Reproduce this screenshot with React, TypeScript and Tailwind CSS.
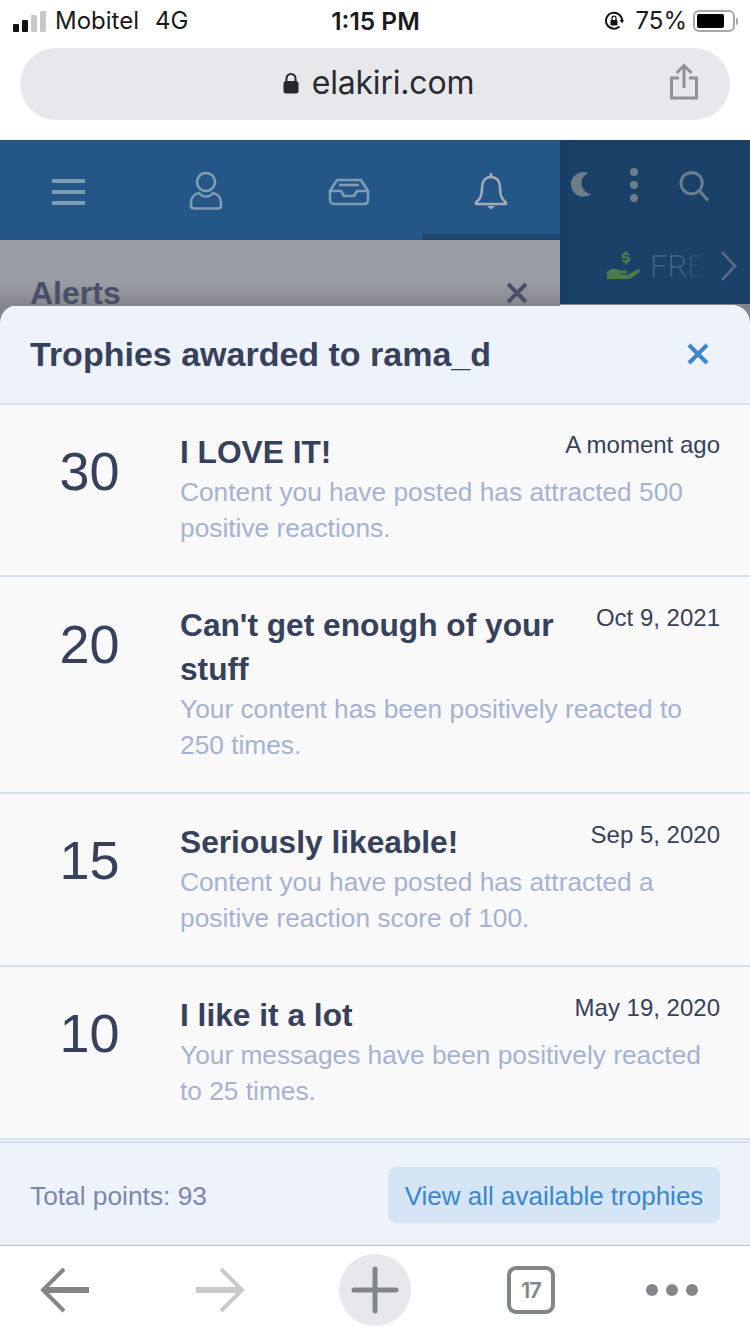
const trophies = [
  { points: 30, title: "I LOVE IT!", date: "A moment ago", text: "Content you have posted has attracted 500 positive reactions.", h: "h-[172px]", pt: "pt-[25px]", numPt: "pt-[36px]" },
  { points: 20, title: "Can't get enough of your stuff", date: "Oct 9, 2021", text: "Your content has been positively reacted to 250 times.", h: "h-[217px]", pt: "pt-[26px]", numPt: "pt-[37px]" },
  { points: 15, title: "Seriously likeable!", date: "Sep 5, 2020", text: "Content you have posted has attracted a positive reaction score of 100.", h: "h-[173px]", pt: "pt-[26px]", numPt: "pt-[36px]" },
  { points: 10, title: "I like it a lot", date: "May 19, 2020", text: "Your messages have been positively reacted to 25 times.", h: "h-[173px]", pt: "pt-[26px]", numPt: "pt-[36px]" },
];

function StatusBar() {
  return (
    <div className="flex h-[40px] items-center justify-between pl-[13px] pr-[12px] pt-[2px] font-['Inter',sans-serif] text-[24px] text-[#1a1a1c]">
      <div className="flex w-[260px] items-center">
        <div className="flex items-end gap-[3px]">
          <span className="h-[8px] w-[6px] rounded-[1px] bg-[#111]" />
          <span className="h-[12px] w-[6px] rounded-[1px] bg-[#111]" />
          <span className="h-[17px] w-[6px] rounded-[1px] bg-[#c8c8c8]" />
          <span className="h-[21px] w-[6px] rounded-[1px] bg-[#c8c8c8]" />
        </div>
        <span className="ml-[9px]">Mobitel</span>
        <span className="ml-[16px]">4G</span>
      </div>
      <div className="text-[24.500px] font-semibold">1:15 PM</div>
      <div className="flex w-[260px] items-center justify-end">
        <svg width="20" height="20" viewBox="0 0 20 20" fill="none" className="mr-[11px]">
          <path d="M15.500 15.500A8 8 0 1 1 18 10" stroke="#111" strokeWidth="2" />
          <path d="M15.500 9l2.700 3.400L20 9z" fill="#111" />
          <rect x="6.500" y="9" width="7" height="5.500" rx="1" fill="#111" />
          <path d="M8 9V7.200a2 2 0 0 1 4 0V9" stroke="#111" strokeWidth="1.300" />
        </svg>
        <span>75%</span>
        <div className="ml-[6px] flex h-[22px] w-[42px] items-center rounded-[6px] border-2 border-[#a8a8a8] p-[2px]">
          <div className="h-full w-[27px] rounded-[2px] bg-black" />
        </div>
        <div className="ml-[1px] h-[7px] w-[2px] rounded-r-sm bg-[#a8a8a8]" />
      </div>
    </div>
  );
}

function UrlBar() {
  return (
    <div className="bg-white px-[20px] pb-[20px] pt-[8px]">
      <div className="relative flex h-[72px] items-center justify-center rounded-[36px] bg-[#e7e8ec] pl-[7px]">
        <svg width="16" height="22" viewBox="0 0 16 22" className="mr-[13px] mt-[-2px]" fill="none">
          <path d="M3.500 10V6.500a4.500 4.500 0 0 1 9 0V10" stroke="#26272b" strokeWidth="2" />
          <rect x="0.500" y="9" width="15" height="12.500" rx="2.500" fill="#26272b" />
        </svg>
        <span className="mt-[-2px] font-['Inter',sans-serif] text-[32px] leading-none tracking-[-0.2px] text-[#2a2b2f]">elakiri.com</span>
        <svg width="30" height="38" viewBox="0 0 30 38" fill="none" className="absolute right-[31px] top-[15px]" stroke="#8f9296" strokeWidth="3">
          <path d="M15 25V3" />
          <path d="M7.500 10L15 2.500 22.500 10" />
          <path d="M10 15H2.500v20h25V15H20" />
        </svg>
      </div>
    </div>
  );
}

function Backdrop() {
  return (
    <div className="flex h-[166px] overflow-hidden bg-[#85878c]">
      <div className="w-[560px]">
        <div className="flex h-[100px] border-t border-[#1f4a73] bg-[#245787]">
          <div className="flex w-[137px] items-center justify-center pt-[2px]">
            <svg width="33" height="26" viewBox="0 0 33 26" stroke="#7f9cb4" strokeWidth="4">
              <path d="M0 2h33M0 13h33M0 24h33" />
            </svg>
          </div>
          <div className="flex w-[138px] items-center justify-center pt-[1px]">
            <svg width="34" height="38" viewBox="0 0 34 38" fill="none" stroke="#7f9cb4" strokeWidth="2.600">
              <ellipse cx="17" cy="10" rx="9" ry="9" />
              <path d="M10 21c-5 1-8 5-8 10v2.500c0 2 1 3 3 3h24c2 0 3-1 3-3V31c0-5-3-9-8-10-2 2.500-4.500 3.500-7 3.500s-5-1-7-3.500z" />
            </svg>
          </div>
          <div className="flex w-[147px] items-center justify-center pt-[2px]">
            <svg width="42" height="28" viewBox="0 0 42 28" fill="none" stroke="#7f9cb4" strokeWidth="2.600">
              <path d="M9 2h24l7 11v9c0 2.500-1.500 4-4 4H6c-2.500 0-4-1.500-4-4v-9z" />
              <path d="M2 13h11l3 5h10l3-5h11" />
              <path d="M11 7h20" />
            </svg>
          </div>
          <div className="flex w-[138px] flex-col items-center border-b-[6px] border-[#1f4770] pt-[31px]">
            <svg width="34" height="38" viewBox="0 0 34 38" fill="none" stroke="#a3adb5" strokeWidth="2.600">
              <path d="M17 5c-6 0-9 4.500-9 11 0 8-2 11-6 14.500V32h30v-1.500C28 27 26 24 26 16c0-6.500-3-11-9-11z" strokeLinejoin="round" />
              <path d="M17 1v4" />
              <path d="M13 34h8l-4 3.500z" fill="#a3adb5" stroke="none" />
            </svg>
          </div>
        </div>
        <div className="h-[66px] bg-[linear-gradient(#9a9ca3_65%,#85878c_100%)] px-[30px] pt-[36px]">
          <div className="flex items-center justify-between pr-[1px] font-['Liberation_Sans',sans-serif]">
            <span className="text-[32px] font-bold leading-[34px] text-[#484f66]">Alerts</span>
            <svg width="22" height="22" viewBox="0 0 22 22" stroke="#484f66" strokeWidth="4" className="mr-[1px]">
              <path d="M2 2l18 18M20 2L2 20" />
            </svg>
          </div>
        </div>
      </div>
      <div className="h-[164px] flex-1 bg-[linear-gradient(90deg,#183c61,#1a4269_5%)]">
        <div className="flex h-[110px] items-start pl-[8px] pt-[30px]">
          <svg width="24" height="28" viewBox="0 0 26 28">
            <path d="M22 2a13.500 13.500 0 1 0 3 23 12 12 0 0 1-3-23z" fill="#6d7d8c" />
          </svg>
          <svg width="14" height="36" viewBox="0 0 14 36" fill="#6d7d8c" className="ml-[35px] mt-[-3px]">
            <circle cx="7" cy="5" r="4" />
            <circle cx="7" cy="18" r="4" />
            <circle cx="7" cy="31" r="4" />
          </svg>
          <svg width="31" height="32" viewBox="0 0 32 32" fill="none" stroke="#6d7d8c" strokeWidth="3" className="ml-[38px]">
            <circle cx="13" cy="13" r="11" />
            <path d="M21 21l9 10" />
          </svg>
        </div>
        <div className="flex items-center pl-[47px]">
          <svg width="34" height="32" viewBox="0 0 34 32" fill="#4e7a4b">
            <path d="M0 22c3-3 6-4 9-3l5 1.500h5c2 0 2 3 0 3h-6v1h8l9-5c2-1 4 1 2 3l-9 6.500H0z" />
            <path d="M18 1h2v2c2 0 3 1 3 2h-5c-1 0-1 1.500 0 1.500h3c3 0 3 6-1 6v2h-2v-2c-2 0-3-1-3-2.500h5c1 0 1-1.500 0-1.500h-3c-3 0-3-5 1-6z" />
          </svg>
          <span className="ml-[9px] w-[55px] overflow-hidden bg-[linear-gradient(90deg,#3c6485_55%,#1a4269)] bg-clip-text font-['Roboto',sans-serif] text-[31px] font-light leading-none text-transparent">FREE</span>
          <svg width="18" height="30" viewBox="0 0 18 30" fill="none" stroke="#5f6c80" strokeWidth="2.500" className="ml-[15px]">
            <path d="M2 1l13 14L2 29" />
          </svg>
        </div>
      </div>
    </div>
  );
}

function TrophyRow({ trophy }: { trophy: (typeof trophies)[number] }) {
  return (
    <div className={`flex border-b-2 border-[#d6e0f0] bg-[#f9f9f9] px-[30px] ${trophy.h}`}>
      <div className={`w-[119px] text-center text-[54px] leading-[60px] text-[#37415c] ${trophy.numPt}`}>{trophy.points}</div>
      <div className={`min-w-0 flex-1 pl-[31px] ${trophy.pt}`}>
        <div className="float-right whitespace-nowrap pl-[8px] pt-[1px] text-right text-[24px] leading-[28px] text-[#37415c]">{trophy.date}</div>
        <div className="text-[31.700px] font-bold leading-[44px] text-[#37415c]">{trophy.title}</div>
        <div className="text-[26.300px] leading-[36px] text-[#a5b2d2]">{trophy.text}</div>
      </div>
    </div>
  );
}

function TrophyModal() {
  return (
    <div className="mt-[-1px] bg-[#85878c]">
      <div className="overflow-hidden rounded-t-[18px] font-['Liberation_Sans',sans-serif]">
        <div className="flex h-[100px] items-center justify-between border-b-2 border-[#d6e0f0] bg-[#edf2fb] pl-[30px] pr-[41px]">
          <span className="text-[34px] font-bold text-[#37415c]">Trophies awarded to rama_d</span>
          <svg width="22" height="22" viewBox="0 0 22 22" stroke="#3a87cf" strokeWidth="4">
            <path d="M2 2l18 18M20 2L2 20" />
          </svg>
        </div>
        {trophies.map((trophy) => (
          <TrophyRow key={trophy.points} trophy={trophy} />
        ))}
        <div className="h-[1px] bg-[#f4f6fb]" />
        <div className="flex h-[104px] items-center justify-between border-t-2 border-[#d6e0f0] bg-[#edf2fb] px-[30px] pt-[2px]">
          <span className="pt-[3px] text-[26.300px] text-[#7a88ad]">Total points: 93</span>
          <div className="flex h-[56px] w-[332px] items-center justify-center rounded-[8px] bg-[#d5e5f5] pt-[3px] text-[26px] text-[#3a87cf]">View all available trophies</div>
        </div>
      </div>
    </div>
  );
}

function Toolbar() {
  return (
    <div className="flex h-[89px] items-center border-t border-[#bcbfc4] bg-white pl-[40px] pr-[52px]">
      <svg width="49" height="46" viewBox="0 0 49 46" fill="none" stroke="#838688" strokeWidth="4">
        <path d="M49 23H4" strokeWidth="6" />
        <path d="M24 2L3 23l21 21" />
      </svg>
      <svg width="49" height="46" viewBox="0 0 49 46" fill="none" stroke="#c9c9c9" strokeWidth="4" className="ml-[107px]">
        <path d="M0 23h45" strokeWidth="6" />
        <path d="M25 2l21 21-21 21" />
      </svg>
      <div className="ml-[94px] flex h-[72px] w-[72px] items-center justify-center rounded-full bg-[#e7e8ec]">
        <svg width="48" height="48" viewBox="0 0 48 48" stroke="#838688" strokeWidth="5" strokeLinecap="round">
          <path d="M24 3v42M3 24h42" />
        </svg>
      </div>
      <div className="ml-[96px] flex h-[48px] w-[48px] items-center justify-center rounded-[9px] border-4 border-[#838688] font-['Inter',sans-serif] text-[22px] font-semibold tracking-[-1px] text-[#838688]">17</div>
      <div className="ml-auto flex gap-[8px]">
        <span className="h-[12px] w-[12px] rounded-full bg-[#838688]" />
        <span className="h-[12px] w-[12px] rounded-full bg-[#838688]" />
        <span className="h-[12px] w-[12px] rounded-full bg-[#838688]" />
      </div>
    </div>
  );
}

export default function App() {
  return (
    <div className="h-[1334px] w-[750px] overflow-hidden bg-white">
      <StatusBar />
      <UrlBar />
      <Backdrop />
      <TrophyModal />
      <Toolbar />
    </div>
  );
}
